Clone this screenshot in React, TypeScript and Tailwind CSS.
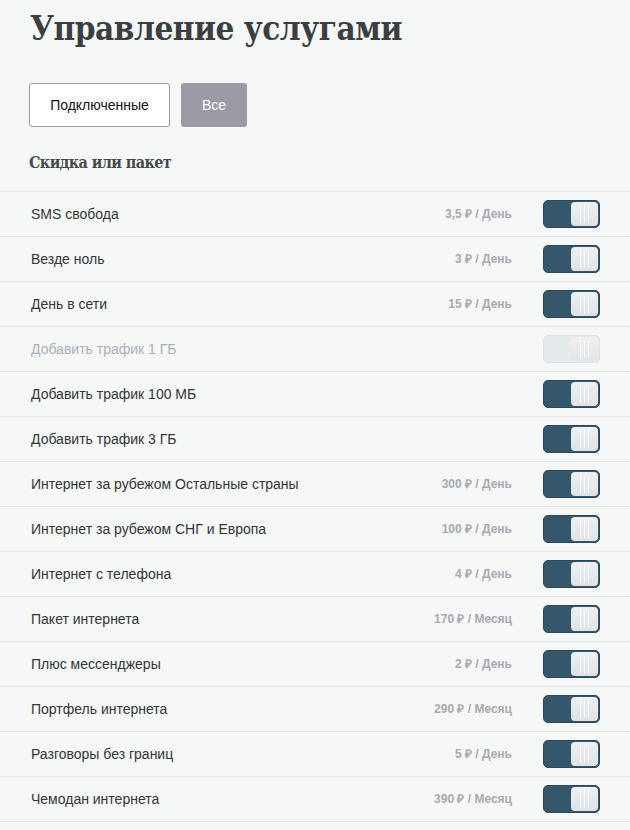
import React from "react";

type Service = { name: string; price?: string; period?: string; disabled?: boolean };

const services: Service[] = [
  { name: "SMS свобода", price: "3,5", period: "День" },
  { name: "Везде ноль", price: "3", period: "День" },
  { name: "День в сети", price: "15", period: "День" },
  { name: "Добавить трафик 1 ГБ", disabled: true },
  { name: "Добавить трафик 100 МБ" },
  { name: "Добавить трафик 3 ГБ" },
  { name: "Интернет за рубежом Остальные страны", price: "300", period: "День" },
  { name: "Интернет за рубежом СНГ и Европа", price: "100", period: "День" },
  { name: "Интернет с телефона", price: "4", period: "День" },
  { name: "Пакет интернета", price: "170", period: "Месяц" },
  { name: "Плюс мессенджеры", price: "2", period: "День" },
  { name: "Портфель интернета", price: "290", period: "Месяц" },
  { name: "Разговоры без границ", price: "5", period: "День" },
  { name: "Чемодан интернета", price: "390", period: "Месяц" },
];

function Toggle({ disabled }: { disabled?: boolean }) {
  return (
    <div
      className={
        "flex justify-end items-center w-[57px] h-[28px] rounded-[5px] border p-[1px] " +
        (disabled ? "bg-[#e5eaec] border-[#dde2e5]" : "bg-[#36566b] border-[#2c4758]")
      }
    >
      <div
        className={
          "flex justify-center items-center gap-[3px] w-[27px] h-[24px] rounded-[4px] " +
          (disabled
            ? "bg-gradient-to-b from-[#eef0f1] to-[#e2e5e7]"
            : "bg-gradient-to-b from-[#eef0f2] to-[#dfe3e6]")
        }
      >
        <span className="w-px h-[18px] bg-[#f8f9fa]" />
        <span className="w-px h-[18px] bg-[#f8f9fa]" />
        <span className="w-px h-[18px] bg-[#f8f9fa]" />
      </div>
    </div>
  );
}

export default function App() {
  return (
    <div className="min-h-screen bg-[#f6f7f7] font-['Liberation_Sans',Arial,sans-serif]">
      <h1 className="pl-[30px] pt-[8px] text-[33px] leading-[42px] font-bold text-[#3b3f44] font-['DejaVu_Serif_Condensed','DejaVu_Serif',serif] font-stretch-condensed tracking-[-0.5px]">
        Управление услугами
      </h1>

      <div className="flex gap-[11px] pl-[29px] mt-[33px]">
        <button className="w-[141px] h-[44px] bg-white border border-[#9b9ba3] rounded-[3px] text-[14px] text-[#111]">
          Подключенные
        </button>
        <button className="w-[66px] h-[44px] bg-[#9b9ba6] rounded-[3px] text-[14px] text-white">
          Все
        </button>
      </div>

      <h2 className="pl-[29px] mt-[25px] text-[16px] leading-[22px] font-bold text-[#45484c] font-['DejaVu_Serif_Condensed','DejaVu_Serif',serif] font-stretch-condensed tracking-[-0.6px]">
        Скидка или пакет
      </h2>

      <div className="mt-[17px] border-t border-[#e3e5e8]">
        {services.map((s) => (
          <div
            key={s.name}
            className="flex items-center h-[45px] pl-[31px] pr-[30px] border-b border-[#e3e5e8]"
          >
            <span
              className={
                "flex-1 text-[14px] " + (s.disabled ? "text-[#aab0ba]" : "text-[#333538]")
              }
            >
              {s.name}
            </span>
            {s.price && (
              <span className="text-[12px] font-bold text-[#a9a9b2] mr-[31px]">
                {s.price} ₽ / {s.period}
              </span>
            )}
            <Toggle disabled={s.disabled} />
          </div>
        ))}
      </div>
    </div>
  );
}
